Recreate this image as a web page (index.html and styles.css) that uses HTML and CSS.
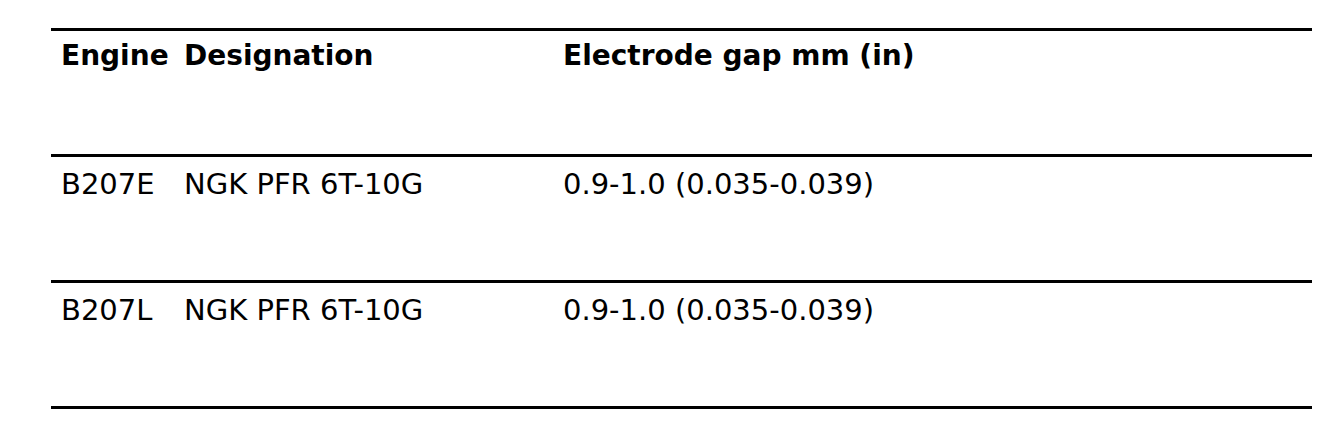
FILE: index.html
```html
<!DOCTYPE html>
<html>
<head>
<meta charset="utf-8">
<link rel="stylesheet" href="styles.css">
</head>
<body>
<div class="wrap">
<table class="spec">
  <colgroup>
    <col class="c-engine">
    <col class="c-desig">
    <col class="c-gap">
  </colgroup>
  <thead>
    <tr>
      <th>Engine</th>
      <th>Designation</th>
      <th>Electrode gap mm (in)</th>
    </tr>
  </thead>
  <tbody>
    <tr>
      <td>B207E</td>
      <td>NGK PFR 6T-10G</td>
      <td>0.9-1.0 (0.035-0.039)</td>
    </tr>
    <tr>
      <td>B207L</td>
      <td>NGK PFR 6T-10G</td>
      <td>0.9-1.0 (0.035-0.039)</td>
    </tr>
  </tbody>
</table>
</div>
</body>
</html>
```
FILE: styles.css
```css
html, body {
  margin: 0;
  padding: 0;
  background: #fff;
}
.wrap {
  padding: 28px 32px 0 51px;
}
.spec {
  width: 1261px;
  table-layout: fixed;
  border-collapse: collapse;
  font-family: "DejaVu Sans", Verdana, sans-serif;
  font-size: 29px;
  line-height: 32px;
  color: #000;
  -webkit-font-smoothing: none;
}
.c-engine { width: 123px; }
.c-desig { width: 379px; }
.spec th, .spec td {
  text-align: left;
  vertical-align: top;
  padding: 11px 0 0 10px;
  height: 112px;
  border-top: 3px solid #000;
  border-bottom: 3px solid #000;
  white-space: nowrap;
  overflow: visible;
}
.spec th {
  font-weight: bold;
  font-size: 28px;
  padding-top: 9px;
  height: 114px;
}
```
